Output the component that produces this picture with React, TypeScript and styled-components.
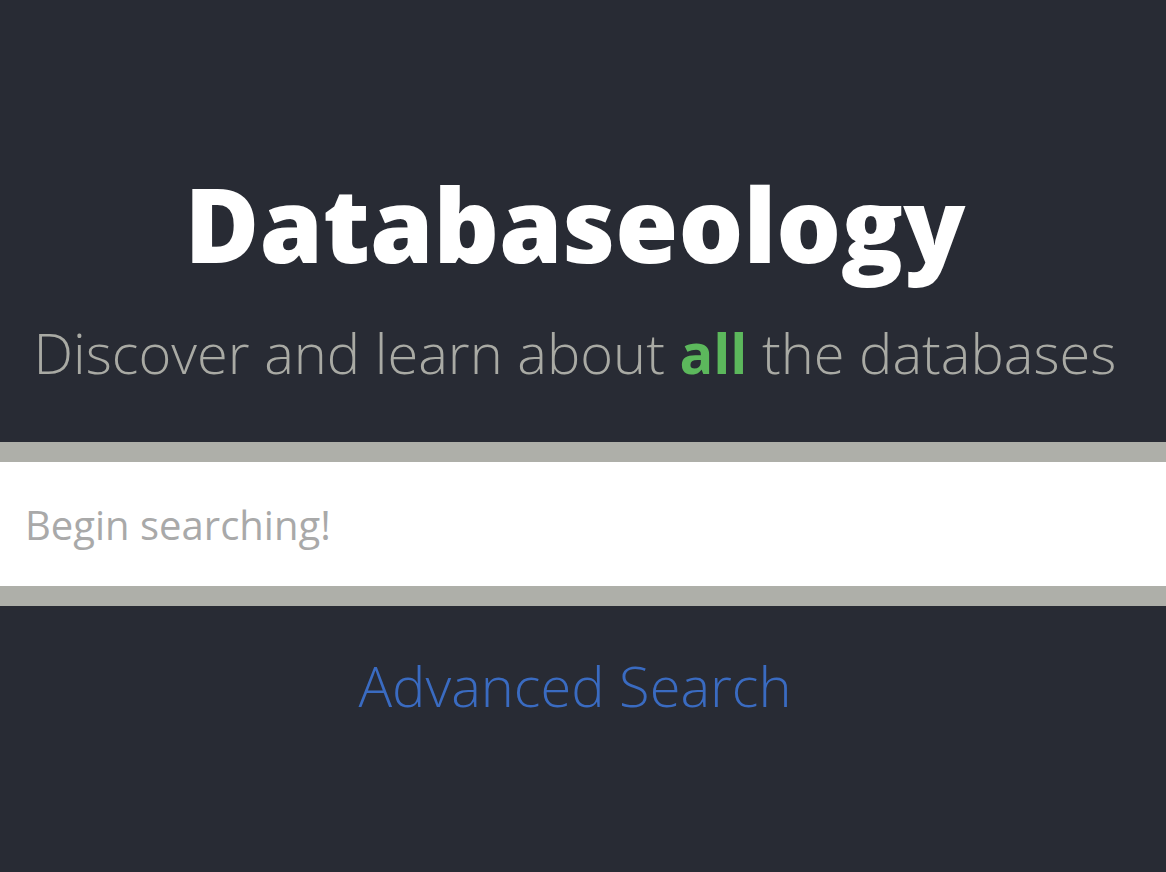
import React from "react";
import styled, { createGlobalStyle } from "styled-components";

const Global = createGlobalStyle`
  html, body { margin: 0; padding: 0; background: #282b34; }
  body { font-family: "Open Sans", "Noto Sans", sans-serif; }
  * { box-sizing: border-box; }
`;

const Page = styled.main`
  min-height: 872px;
  background: #282b34;
  display: flex;
  flex-direction: column;
  padding-top: 155px;
`;

const Centered = styled.div<{ $top?: number }>`
  display: flex;
  flex-direction: column;
  align-items: center;
  padding-right: 16px;
  margin-top: ${(p) => p.$top ?? 0}px;
`;

const Title = styled.h1`
  margin: 0;
  font-family: "Open Sans", sans-serif;
  font-weight: 800;
  font-size: 102px;
  line-height: 1.362;
  color: #ffffff;
`;

const Subtitle = styled.p`
  margin: 20px 0 0;
  font-family: "Open Sans", sans-serif;
  font-weight: 300;
  font-size: 56px;
  line-height: 1.362;
  color: #a9aaa4;
`;

const Highlight = styled.strong`
  font-weight: 700;
  color: #5cb85c;
`;

const SearchBand = styled.div`
  margin-top: 52px;
  border-top: 20px solid #aeafa9;
  border-bottom: 20px solid #aeafa9;
  background: #ffffff;
`;

const SearchInput = styled.input`
  display: block;
  width: 100%;
  height: 124px;
  border: 0;
  outline: none;
  padding: 0 25px;
  font-family: "Open Sans", sans-serif;
  font-size: 40px;
  color: #333;
  background: #ffffff;
  &::placeholder { color: #a9a9a9; }
`;

const AdvancedLink = styled.a`
  font-family: "Open Sans", sans-serif;
  font-weight: 300;
  font-size: 56px;
  line-height: 1.362;
  color: #3a6bc1;
  text-decoration: none;
`;

export default function App() {
  return (
    <>
      <Global />
      <Page>
        <Centered>
          <Title>Databaseology</Title>
          <Subtitle>
            Discover and learn about <Highlight>all</Highlight> the databases
          </Subtitle>
        </Centered>
        <SearchBand>
          <SearchInput placeholder="Begin searching!" />
        </SearchBand>
        <Centered $top={41}>
          <AdvancedLink href="#">Advanced Search</AdvancedLink>
        </Centered>
      </Page>
    </>
  );
}
